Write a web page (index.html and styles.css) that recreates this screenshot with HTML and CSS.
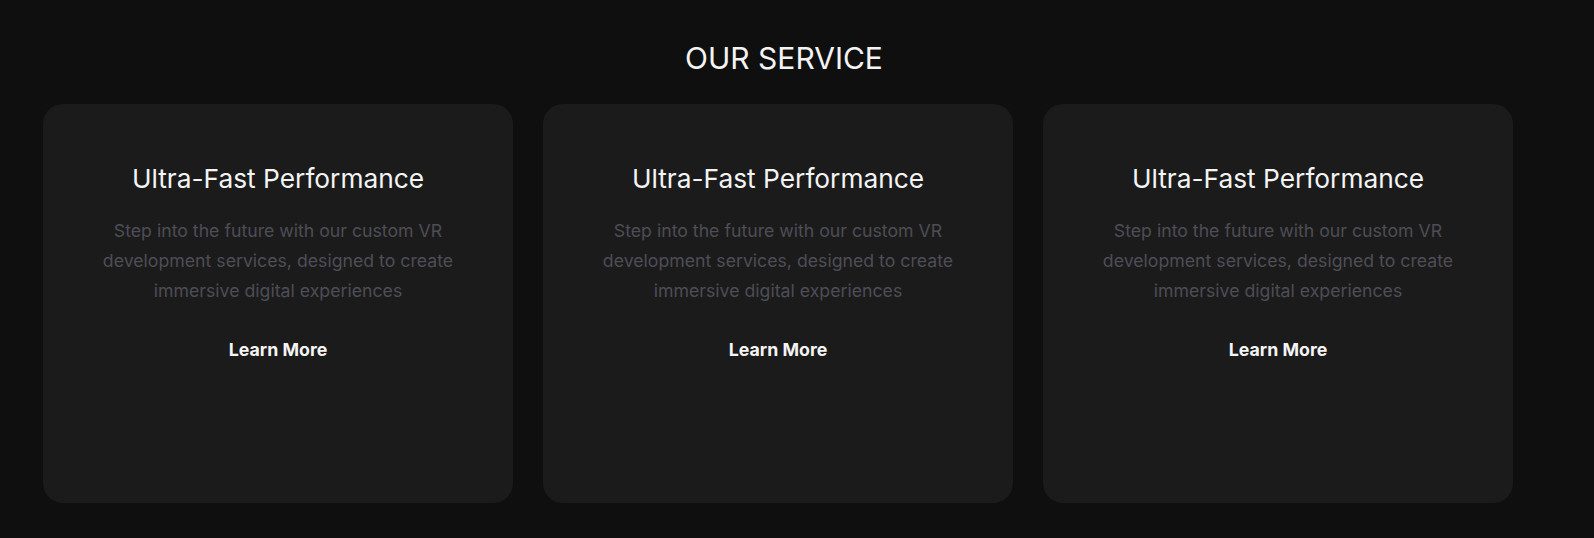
FILE: index.html
```html
<!DOCTYPE html>
<html lang="en">
<head>
<meta charset="utf-8">
<title>Our Service</title>
<link rel="stylesheet" href="styles.css">
</head>
<body>
<section class="services">
  <h2 class="services-title">OUR SERVICE</h2>
  <div class="cards">
    <article class="card">
      <h3 class="card-title">Ultra-Fast Performance</h3>
      <p class="card-text">Step into the future with our custom VR development services, designed to create immersive digital experiences</p>
      <a class="card-link" href="#">Learn More</a>
    </article>
    <article class="card">
      <h3 class="card-title">Ultra-Fast Performance</h3>
      <p class="card-text">Step into the future with our custom VR development services, designed to create immersive digital experiences</p>
      <a class="card-link" href="#">Learn More</a>
    </article>
    <article class="card">
      <h3 class="card-title">Ultra-Fast Performance</h3>
      <p class="card-text">Step into the future with our custom VR development services, designed to create immersive digital experiences</p>
      <a class="card-link" href="#">Learn More</a>
    </article>
  </div>
</section>
</body>
</html>
```

FILE: styles.css
```css
* { box-sizing: border-box; }
html, body { margin: 0; padding: 0; }
body {
  background: #0f0f0f;
  font-family: Inter, "Noto Sans", sans-serif;
  color: #f2f2f2;
  width: 1594px;
  height: 538px;
  overflow: hidden;
}
.services {
  padding: 38px 69px 0 43px;
}
.services-title {
  margin: 0 0 26px;
  text-align: center;
  font-weight: 400;
  font-size: 30px;
  line-height: 40px;
  color: #f4f4f4;
}
.cards {
  display: grid;
  grid-template-columns: repeat(3, 470px);
  gap: 30px;
}
.card {
  background: #1b1b1b;
  border-radius: 20px;
  height: 399px;
  padding: 57px 40px 0;
  display: flex;
  flex-direction: column;
  align-items: center;
  text-align: center;
}
.card-title {
  margin: 0 0 19px;
  font-weight: 400;
  font-size: 26.3px;
  line-height: 36px;
  color: #f4f4f4;
}
.card-text {
  margin: 0 0 32px;
  max-width: 360px;
  font-size: 17.7px;
  line-height: 30px;
  color: #4e4d56;
}
.card-link {
  font-size: 17.8px;
  font-weight: 700;
  line-height: 24px;
  color: #f4f4f4;
  text-decoration: none;
}
```
